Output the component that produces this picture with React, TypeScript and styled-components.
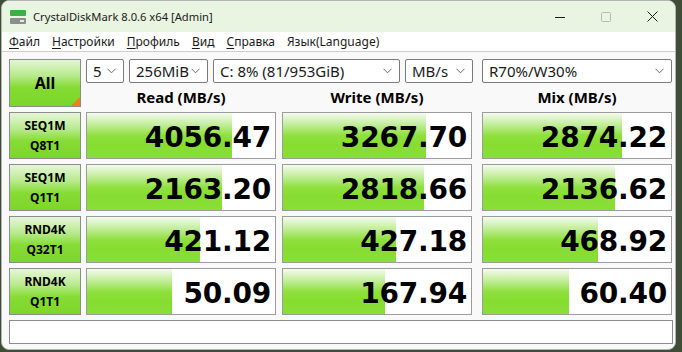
import React from "react";
import styled, { createGlobalStyle } from "styled-components";

const GlobalStyle = createGlobalStyle`
  html, body {
    margin: 0;
    padding: 0;
    background: #3f4d36;
    overflow: hidden;
  }
  * { box-sizing: border-box; }
`;

// Window frame
const Window = styled.div`
  margin-left: 1px;
  width: 675px;
  height: 350px;
  background: #f9f9f9;
  border: 1px solid #b4b4b4;
  border-radius: 8px;
  overflow: hidden;
  font-family: "Noto Sans", "Open Sans", sans-serif;
  color: #000;
  display: flex;
  flex-direction: column;
`;

const TitleBar = styled.div`
  height: 31px;
  background: #e9f4e1;
  display: flex;
  align-items: center;
  padding-left: 8px;
`;

const TitleText = styled.span`
  font-size: 11.2px;
  margin-left: 7px;
  color: #1a1a1a;
  flex: 1;
`;

const Controls = styled.div`
  display: flex;
  align-items: center;
  height: 100%;
`;

const ControlButton = styled.div`
  width: 46px;
  height: 100%;
  display: flex;
  align-items: center;
  justify-content: center;
`;

const MenuBar = styled.div`
  height: 20px;
  background: #ffffff;
  border-bottom: 1px solid #cfcfcf;
  display: flex;
  align-items: center;
  padding-left: 1px;
`;

const MenuItem = styled.span`
  font-size: 12px;
  padding: 0 6px;
  color: #1a1a1a;
  u { text-decoration-thickness: 1px; text-underline-offset: 2px; }
`;

// Client area
const Client = styled.div`
  flex: 1;
  padding: 7px 0 0 7px;
  display: flex;
  flex-direction: column;
  gap: 5px;
`;

const TopSection = styled.div`
  display: grid;
  grid-template-columns: 77px 596px;
  grid-template-rows: 24px 24px;
`;

const AllButton = styled.div`
  grid-row: 1 / span 2;
  width: 72px;
  height: 48px;
  position: relative;
  border: 1px solid #8c8c8c;
  background: linear-gradient(to bottom, #e4f6d4 0%, #b6e98a 35%, #84db32 60%, #7cd62a 100%);
  display: flex;
  align-items: center;
  justify-content: center;
  font-weight: 700;
  font-size: 16px;
  &::after {
    content: "";
    position: absolute;
    right: 0;
    bottom: 0;
    border-style: solid;
    border-width: 0 0 9px 9px;
    border-color: transparent transparent #f07f1c transparent;
  }
`;

const Selects = styled.div`
  display: flex;
  gap: 5px;
  height: 24px;
`;

const Select = styled.div<{ $w: number; $push?: boolean }>`
  width: ${(p) => p.$w}px;
  height: 24px;
  margin-left: ${(p) => (p.$push ? 4 : 0)}px;
  background: #fff;
  border: 1px solid #7a7a7a;
  border-radius: 2px;
  display: flex;
  align-items: center;
  justify-content: space-between;
  padding: 0 7px 0 6px;
  font-size: 15px;
  color: #1a1a1a;
  white-space: nowrap;
`;

const Headers = styled.div`
  display: grid;
  grid-template-columns: 196px 200px 190px;
  align-items: center;
`;

const Header = styled.div`
  width: 190px;
  text-align: center;
  font-weight: 700;
  font-size: 15px;
  padding-top: 4px;
`;

const Row = styled.div<{ $h: number }>`
  display: grid;
  grid-template-columns: 77px 196px 200px 190px;
  height: ${(p) => p.$h}px;
`;

const Label = styled.div`
  width: 72px;
  border: 1px solid #8c8c8c;
  background: linear-gradient(to bottom, #e6f6d8 0%, #b9ea8e 35%, #86dc34 62%, #7ed52c 100%);
  display: flex;
  flex-direction: column;
  align-items: center;
  justify-content: center;
  font-weight: 700;
  font-size: 12px;
  line-height: 20px;
`;

const Cell = styled.div`
  position: relative;
  width: 190px;
  border: 1px solid #9c9c9c;
  background: #fff;
  overflow: hidden;
`;

const Bar = styled.div`
  position: absolute;
  left: 0;
  top: 0;
  bottom: 0;
  background: linear-gradient(to bottom, #f4fbee 0%, #c4ee9e 25%, #8fe03e 50%, #86dd30 70%, #8ade36 100%);
`;

const Value = styled.div`
  position: relative;
  height: 100%;
  display: flex;
  align-items: center;
  justify-content: flex-end;
  padding: 4px 4px 0 0;
  font-family: "DejaVu Sans", "Verdana", sans-serif;
  font-weight: 700;
  font-size: 28px;
  letter-spacing: -0.2px;
`;

const StatusBar = styled.div`
  width: 664px;
  height: 24px;
  background: #fff;
  border: 1px solid #8c8c8c;
`;

const Chevron = () => (
  <svg width="9" height="6" viewBox="0 0 9 6">
    <polyline points="0.5,0.8 4.5,4.8 8.5,0.8" fill="none" stroke="#6a6a6a" strokeWidth="1" />
  </svg>
);

const DriveIcon = () => (
  <svg width="16" height="16" viewBox="0 0 16 16">
    <rect x="0" y="1" width="16" height="6" rx="1" fill="#3cb043" />
    <rect x="0" y="9" width="16" height="6" rx="1" fill="#8d8d8d" />
    <rect x="10" y="11" width="4" height="2" fill="#e8e8e8" />
  </svg>
);

type Result = { v: string; f: number };
const rows: { a: string; b: string; cells: Result[] }[] = [
  { a: "SEQ1M", b: "Q8T1", cells: [{ v: "4056.47", f: 0.77 }, { v: "3267.70", f: 0.76 }, { v: "2874.22", f: 0.74 }] },
  { a: "SEQ1M", b: "Q1T1", cells: [{ v: "2163.20", f: 0.72 }, { v: "2818.66", f: 0.75 }, { v: "2136.62", f: 0.7 }] },
  { a: "RND4K", b: "Q32T1", cells: [{ v: "421.12", f: 0.6 }, { v: "427.18", f: 0.6 }, { v: "468.92", f: 0.61 }] },
  { a: "RND4K", b: "Q1T1", cells: [{ v: "50.09", f: 0.45 }, { v: "167.94", f: 0.54 }, { v: "60.40", f: 0.46 }] },
];

const selects = [
  { label: "5", w: 38 },
  { label: "256MiB", w: 79 },
  { label: "C: 8% (81/953GiB)", w: 187 },
  { label: "MB/s", w: 68 },
  { label: "R70%/W30%", w: 190, push: true },
];

export default function App() {
  return (
    <>
      <GlobalStyle />
      <Window>
        <TitleBar>
          <DriveIcon />
          <TitleText>CrystalDiskMark 8.0.6 x64 [Admin]</TitleText>
          <Controls>
            <ControlButton>
              <svg width="10" height="10" viewBox="0 0 10 10">
                <line x1="0" y1="5.5" x2="10" y2="5.5" stroke="#1a1a1a" strokeWidth="1" />
              </svg>
            </ControlButton>
            <ControlButton>
              <svg width="10" height="10" viewBox="0 0 10 10">
                <rect x="0.5" y="0.5" width="9" height="9" rx="1" fill="none" stroke="#b8b8b8" strokeWidth="1" />
              </svg>
            </ControlButton>
            <ControlButton>
              <svg width="11" height="11" viewBox="0 0 11 11">
                <path d="M0.5 0.5 L10.5 10.5 M10.5 0.5 L0.5 10.5" stroke="#1a1a1a" strokeWidth="1" />
              </svg>
            </ControlButton>
          </Controls>
        </TitleBar>

        <MenuBar>
          <MenuItem><u>Ф</u>айл</MenuItem>
          <MenuItem><u>Н</u>астройки</MenuItem>
          <MenuItem><u>П</u>рофиль</MenuItem>
          <MenuItem><u>В</u>ид</MenuItem>
          <MenuItem><u>С</u>правка</MenuItem>
          <MenuItem>Язык(Language)</MenuItem>
        </MenuBar>

        <Client>
          <TopSection>
            <AllButton>All</AllButton>
            <Selects>
              {selects.map((s) => (
                <Select key={s.label} $w={s.w} $push={s.push}>
                  <span>{s.label}</span>
                  <Chevron />
                </Select>
              ))}
            </Selects>
            <Headers>
              <Header>Read (MB/s)</Header>
              <Header>Write (MB/s)</Header>
              <Header>Mix (MB/s)</Header>
            </Headers>
          </TopSection>

          {rows.map((r, i) => (
            <Row key={i} $h={47}>
              <Label>
                <span>{r.a}</span>
                <span>{r.b}</span>
              </Label>
              {r.cells.map((c, j) => (
                <Cell key={j}>
                  <Bar style={{ width: `${c.f * 100}%` }} />
                  <Value>{c.v}</Value>
                </Cell>
              ))}
            </Row>
          ))}

          <StatusBar />
        </Client>
      </Window>
    </>
  );
}
